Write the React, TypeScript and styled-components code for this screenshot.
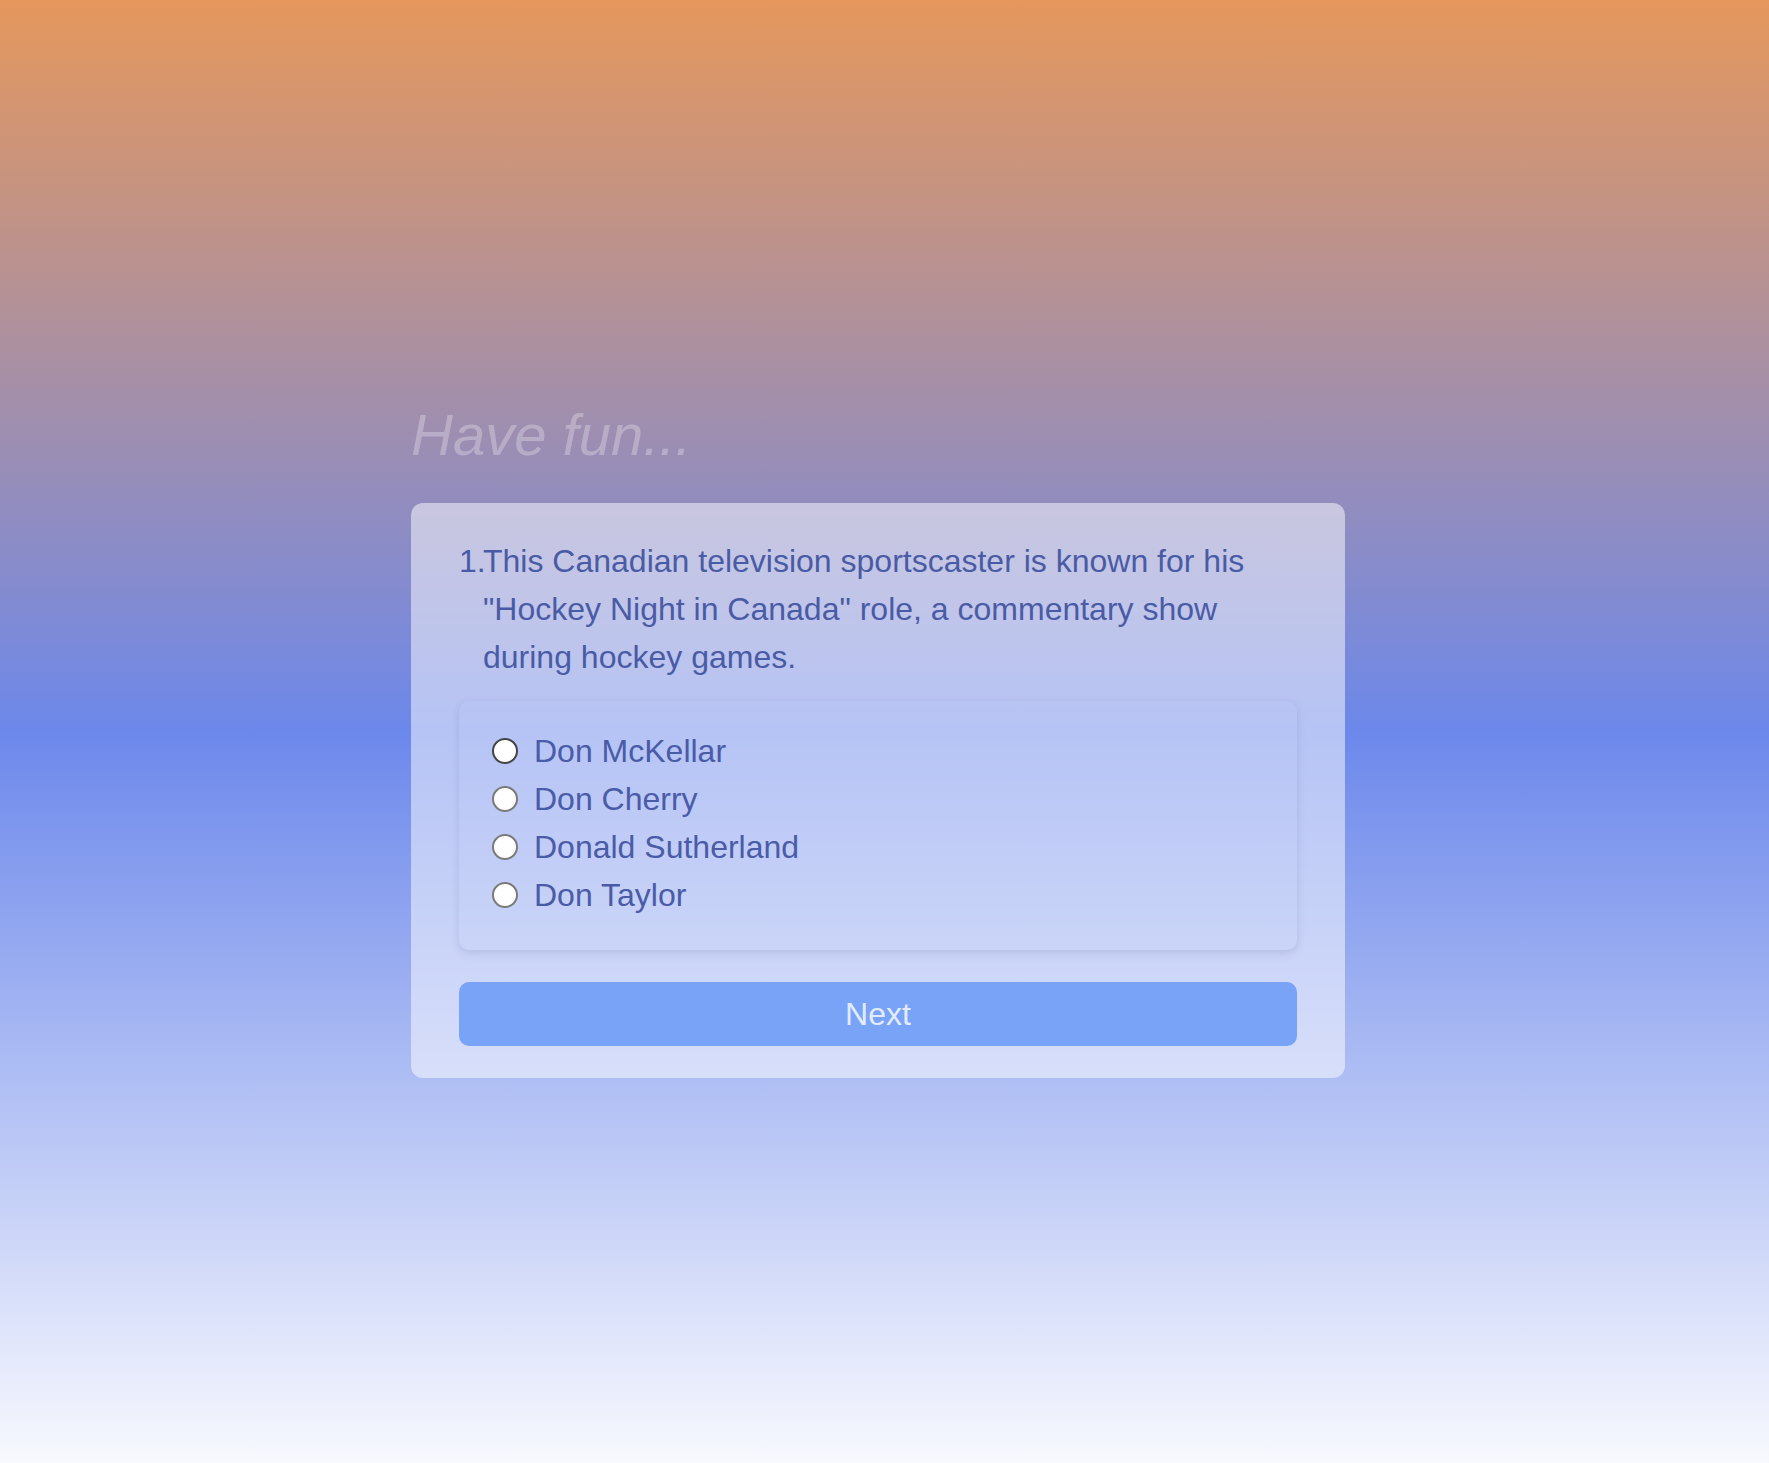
import React, { useState } from "react";
import styled, { createGlobalStyle } from "styled-components";

const GlobalStyle = createGlobalStyle`
  html, body {
    margin: 0;
    padding: 0;
  }
  body {
    min-height: 100vh;
    font-family: "Liberation Sans", Arial, Helvetica, sans-serif;
    background: linear-gradient(to bottom, #e5975c 0%, #6c88eb 50%, #f8f9fe 100%);
    background-attachment: fixed;
  }
`;

const answers = ["Don McKellar", "Don Cherry", "Donald Sutherland", "Don Taylor"];

const App = () => {
  const [picked, setPicked] = useState<number | null>(null);

  return (
    <>
      <GlobalStyle />
      <StyledPage>
        <div className="quiz">
          <h1 className="title">Have fun...</h1>
          <section className="card">
            <div className="question">
              <span className="number">1.</span>
              <p>
                This Canadian television sportscaster is known for his "Hockey
                Night in Canada" role, a commentary show during hockey games.
              </p>
            </div>
            <ul className="answers">
              {answers.map((answer, i) => (
                <AnswerRow key={answer} $focused={i === 0}>
                  <input
                    type="radio"
                    name="answer"
                    checked={picked === i}
                    onChange={() => setPicked(i)}
                  />
                  <span>{answer}</span>
                </AnswerRow>
              ))}
            </ul>
            <button className="next-btn" type="button">
              Next
            </button>
          </section>
        </div>
      </StyledPage>
    </>
  );
};

export default App;

const StyledPage = styled.main`
  min-height: 100vh;
  box-sizing: border-box;
  display: flex;
  justify-content: center;
  padding: 400px 13px 0 0;

  .quiz {
    width: 934px;
  }

  .title {
    margin: 0 0 33px;
    font-size: 58px;
    line-height: 70px;
    font-style: italic;
    font-weight: 400;
    color: rgba(255, 255, 255, 0.28);
  }

  .card {
    box-sizing: border-box;
    background-color: rgba(255, 255, 255, 0.5);
    border-radius: 12px;
    padding: 34px 48px 32px;
  }

  .question {
    display: flex;
    color: #4a5ba6;
    font-size: 32px;
    line-height: 48px;
    .number {
      flex-shrink: 0;
      width: 24px;
    }
    p {
      margin: 0;
    }
  }

  .answers {
    list-style: none;
    margin: 20px 0 0;
    padding: 26px 33px 31px;
    border-radius: 10px;
    box-shadow: 0 3px 8px rgba(60, 70, 130, 0.16);
  }

  .next-btn {
    display: block;
    width: 100%;
    height: 64px;
    margin-top: 32px;
    border: none;
    border-radius: 10px;
    background-color: #79a3f7;
    color: #e3ecff;
    font-family: inherit;
    font-size: 32px;
    cursor: pointer;
  }
`;

const AnswerRow = styled.li<{ $focused: boolean }>`
  display: flex;
  align-items: center;
  gap: 16px;
  height: 48px;
  color: #4a5ba8;
  font-size: 32px;

  input {
    appearance: none;
    -webkit-appearance: none;
    margin: 0;
    width: 26px;
    height: 26px;
    border-radius: 50%;
    box-sizing: border-box;
    border: 2px solid ${({ $focused }) => ($focused ? "#444" : "#7a7a7a")};
    background-color: #ffffff;
    cursor: pointer;
    &:checked {
      background: radial-gradient(circle, #2b6fe0 0 6px, #ffffff 7px);
    }
  }
`;
